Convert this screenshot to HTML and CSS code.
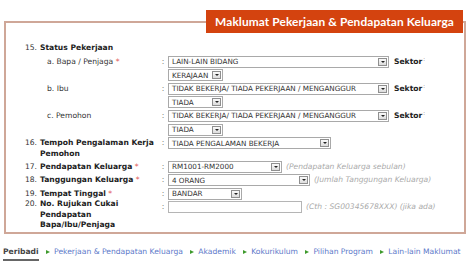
FILE: index.html
```html
<!DOCTYPE html>
<html lang="ms">
<head>
  <meta charset="UTF-8" />
  <title>Maklumat Pekerjaan &amp; Pendapatan Keluarga</title>
  <link rel="stylesheet" href="styles.css">
</head>
<body>
  <fieldset class="panel">
    <legend class="panel-title">Maklumat Pekerjaan &amp; Pendapatan Keluarga</legend>

    <div class="form">
      <div class="num">15.</div>
      <div class="label"><b>Status Pekerjaan</b></div>
      <div></div>
      <div></div>

      <div class="num"></div>
      <div class="label sub">a. Bapa / Penjaga <span class="req">*</span></div>
      <div class="colon">:</div>
      <div class="field">
        <div class="sel w-wide"><span>LAIN-LAIN BIDANG</span><i class="arrow"></i></div>
        <span class="sektor">Sektor<sup>:</sup></span>
      </div>

      <div class="num"></div>
      <div class="label"></div>
      <div class="colon"></div>
      <div class="field">
        <div class="sel w-small"><span>KERAJAAN</span><i class="arrow"></i></div>
      </div>

      <div class="num"></div>
      <div class="label sub">b. Ibu</div>
      <div class="colon">:</div>
      <div class="field">
        <div class="sel w-wide"><span>TIDAK BEKERJA/ TIADA PEKERJAAN / MENGANGGUR</span><i class="arrow"></i></div>
        <span class="sektor">Sektor<sup>:</sup></span>
      </div>

      <div class="num"></div>
      <div class="label"></div>
      <div class="colon"></div>
      <div class="field">
        <div class="sel w-small"><span>TIADA</span><i class="arrow"></i></div>
      </div>

      <div class="num"></div>
      <div class="label sub">c. Pemohon</div>
      <div class="colon">:</div>
      <div class="field">
        <div class="sel w-wide"><span>TIDAK BEKERJA/ TIADA PEKERJAAN / MENGANGGUR</span><i class="arrow"></i></div>
        <span class="sektor">Sektor<sup>:</sup></span>
      </div>

      <div class="num"></div>
      <div class="label"></div>
      <div class="colon"></div>
      <div class="field">
        <div class="sel w-small"><span>TIADA</span><i class="arrow"></i></div>
      </div>

      <div class="num">16.</div>
      <div class="label"><b>Tempoh Pengalaman Kerja Pemohon</b></div>
      <div class="colon">:</div>
      <div class="field">
        <div class="sel w-exp"><span>TIADA PENGALAMAN BEKERJA</span><i class="arrow"></i></div>
      </div>

      <div class="num">17.</div>
      <div class="label"><b>Pendapatan Keluarga</b> <span class="req">*</span></div>
      <div class="colon">:</div>
      <div class="field">
        <div class="sel w-income"><span>RM1001-RM2000</span><i class="arrow"></i></div>
        <span class="hint">(Pendapatan Keluarga sebulan)</span>
      </div>

      <div class="num">18.</div>
      <div class="label"><b>Tanggungan Keluarga</b> <span class="req">*</span></div>
      <div class="colon">:</div>
      <div class="field">
        <div class="sel w-dep"><span>4 ORANG</span><i class="arrow"></i></div>
        <span class="hint">(Jumlah Tanggungan Keluarga)</span>
      </div>

      <div class="num">19.</div>
      <div class="label"><b>Tempat Tinggal</b> <span class="req">*</span></div>
      <div class="colon">:</div>
      <div class="field">
        <div class="sel w-home"><span>BANDAR</span><i class="arrow"></i></div>
      </div>

      <div class="num tight">20.</div>
      <div class="label tight"><b>No. Rujukan Cukai Pendapatan Bapa/Ibu/Penjaga</b></div>
      <div class="colon">:</div>
      <div class="field">
        <input class="text-input" type="text">
        <span class="hint">(Cth : SG00345678XXX) (jika ada)</span>
      </div>
    </div>
  </fieldset>

  <nav class="steps">
    <a class="step current">Peribadi</a>
    <span class="sep"></span><a class="step">Pekerjaan &amp; Pendapatan Keluarga</a>
    <span class="sep"></span><a class="step">Akademik</a>
    <span class="sep"></span><a class="step">Kokurikulum</a>
    <span class="sep"></span><a class="step">Pilihan Program</a>
    <span class="sep"></span><a class="step">Lain-lain Maklumat</a>
  </nav>
</body>
</html>
```

FILE: styles.css
```css
* {
  box-sizing: border-box;
}

body {
  font-family: "DejaVu Sans", Verdana, sans-serif;
  font-size: 7.6px;
  color: #333;
  background: #fff;
  margin: 0;
  padding: 0;
}

.panel {
  margin: 10px 8px 0 4px;
  padding: 0 0 1px 0;
  border: 2px solid #cfa798;
  min-width: 0;
}

.panel-title {
  margin-left: auto;
  margin-right: 1px;
  padding: 0 9px;
  height: 23px;
  line-height: 23px;
  background: #d4430f;
  color: #fff;
  font-family: Lato, "DejaVu Sans", sans-serif;
  font-weight: bold;
  font-size: 11.9px;
  letter-spacing: 0.1px;
}

.form {
  display: grid;
  grid-template-columns: 34px 118px 10px 1fr;
  row-gap: 1.6px;
  padding-top: 9px;
}

.num {
  text-align: right;
  padding-right: 3px;
  line-height: 12px;
}

.label {
  line-height: 10.4px;
  padding-top: 1px;
}

.num.tight {
  margin-top: -3px;
}

.label.tight {
  margin-top: -3px;
}

.label b {
  font-weight: bold;
  color: #222;
}

.label.sub {
  padding-left: 7px;
}

.req {
  color: #e25a5a;
}

.colon {
  line-height: 12px;
  text-align: center;
  color: #777;
}

.field {
  display: flex;
  align-items: center;
  align-self: start;
  gap: 4px;
  height: 12px;
}

.sel {
  height: 12px;
  border: 1px solid #a9a9a9;
  background: #fff;
  display: flex;
  align-items: center;
  justify-content: space-between;
  padding: 0 1px 0 3px;
  font-size: 7.2px;
  color: #333;
  white-space: nowrap;
  overflow: hidden;
}

.arrow {
  flex: none;
  width: 9px;
  height: 8px;
  border: 1px solid #8f8f8f;
  background: linear-gradient(#fafafa, #dcdcdc);
  position: relative;
}

.arrow::after {
  content: "";
  position: absolute;
  left: 1.5px;
  top: 2px;
  border-left: 2.5px solid transparent;
  border-right: 2.5px solid transparent;
  border-top: 2.5px solid #222;
}

.w-wide { width: 221px; }
.w-small { width: 55px; }
.w-exp { width: 163px; }
.w-income { width: 114px; }
.w-dep { width: 142px; }
.w-home { width: 74px; }

.sektor {
  font-weight: bold;
  color: #222;
  line-height: 12px;
  padding-left: 1px;
}

.sektor sup {
  font-weight: normal;
  font-size: 5px;
  line-height: 0;
  vertical-align: baseline;
  position: relative;
  top: -3px;
  margin-left: 1px;
}

.hint {
  font-style: italic;
  color: #aaa;
  line-height: 12px;
}

.text-input {
  width: 134px;
  height: 12px;
  margin: 0;
  border: 1px solid #b5b5b5;
  padding: 0;
}

.steps {
  margin: 12px 0 0 3px;
  line-height: 12px;
  white-space: nowrap;
}

.step {
  color: #5b78c9;
}

.step.current {
  color: #444;
  font-weight: bold;
  display: inline-block;
  border-bottom: 2px solid #666;
  padding-bottom: 1px;
}

.sep {
  display: inline-block;
  margin: 0 4px 0 5px;
  border-top: 2.5px solid transparent;
  border-bottom: 2.5px solid transparent;
  border-left: 4px solid #3e9a2c;
  vertical-align: 0;
}
```
